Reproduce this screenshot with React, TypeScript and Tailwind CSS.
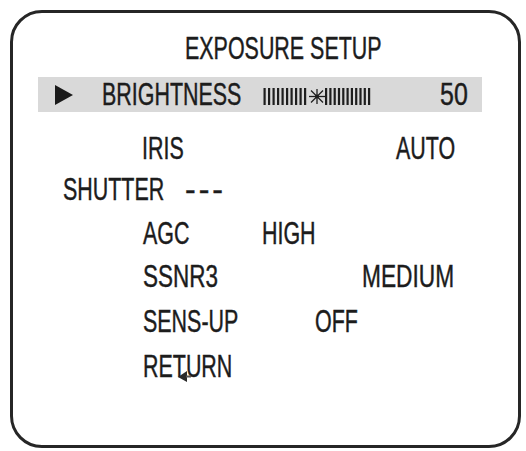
import React from "react";

const T = ({ children, s = "n" }: { children: React.ReactNode; s?: "n" | "d" }) => (
  <span
    className={
      "inline-block whitespace-nowrap origin-left [-webkit-text-stroke:0.45px_#1c1c1c] " +
      (s === "d" ? "scale-x-[0.78]" : "scale-x-[0.67]")
    }
  >
    {children}
  </span>
);

function Slider() {
  const left = Array.from({ length: 10 }, (_, i) => 0.5 + i * 4.5);
  const right = Array.from({ length: 11 }, (_, i) => 62 + i * 4.3);
  return (
    <svg width="108" height="17" viewBox="0 0 108 17" className="block">
      {left.map((x, i) => (
        <rect key={"l" + i} x={x} y={0} width={2.2} height={17} fill="#1e1e1e" />
      ))}
      {right.map((x, i) => (
        <rect key={"r" + i} x={x} y={0} width={2.2} height={17} fill="#1e1e1e" />
      ))}
      <g stroke="#1e1e1e" strokeWidth="1.3">
        <line x1="46" y1="8.5" x2="62" y2="8.5" />
        <line x1="54" y1="1" x2="54" y2="16" />
        <line x1="48" y1="2.5" x2="60" y2="14.5" />
        <line x1="60" y1="2.5" x2="48" y2="14.5" />
      </g>
      <circle cx="54" cy="8.5" r="2" fill="#1e1e1e" />
    </svg>
  );
}

export default function App() {
  return (
    <div
      className="w-[526px] h-[451px] bg-white text-[#1c1c1c] text-[32px] leading-[31px] overflow-hidden"
      style={{ fontFamily: '"Liberation Sans", Arial, sans-serif' }}
    >
      <div className="ml-[10px] mt-[10px] w-[511px] h-[438px] border-[3px] border-[#262626] rounded-[32px] flex flex-col">
        <div className="mt-[20px] pl-[172px] h-[31px]">
          <T>EXPOSURE SETUP</T>
        </div>

        <div className="mt-[13px] ml-[25px] w-[444px] h-[35px] bg-[#d9d9d9] flex items-start pt-[2px]">
          <svg width="18" height="20" viewBox="0 0 18 20" className="ml-[17px] mt-[6px] shrink-0">
            <polygon points="0,0 18,10 0,20" fill="#1a1a1a" />
          </svg>
          <div className="ml-[29px] w-[161px] h-[31px]">
            <T>BRIGHTNESS</T>
          </div>
          <div className="mt-[9px] w-[177px]">
            <Slider />
          </div>
          <div className="h-[31px]">
            <T s="d">50</T>
          </div>
        </div>

        <div className="mt-[21px] pl-[129px] h-[31px] flex">
          <div className="w-[254px]">
            <T>IRIS</T>
          </div>
          <T>AUTO</T>
        </div>

        <div className="mt-[10px] pl-[50px] h-[31px] flex">
          <div className="w-[122px]">
            <T>SHUTTER</T>
          </div>
          <span className="inline-block tracking-[3px] [-webkit-text-stroke:0.45px_#1c1c1c]">---</span>
        </div>

        <div className="mt-[13px] pl-[130px] h-[31px] flex">
          <div className="w-[119px]">
            <T>AGC</T>
          </div>
          <T>HIGH</T>
        </div>

        <div className="mt-[12px] pl-[130px] h-[31px] flex">
          <div className="w-[219px]">
            <T s="d">
              <span className="inline-block scale-x-[0.9] origin-left">SSNR3</span>
            </T>
          </div>
          <span className="inline-block whitespace-nowrap origin-left scale-x-[0.71] [-webkit-text-stroke:0.45px_#1c1c1c]">
            MEDIUM
          </span>
        </div>

        <div className="mt-[14px] pl-[130px] h-[31px] flex">
          <div className="w-[172px]">
            <T>SENS-UP</T>
          </div>
          <T>OFF</T>
        </div>

        <div className="mt-[14px] pl-[130px] h-[31px] flex">
          <div className="relative">
            <T>RETURN</T>
            <svg
              width="20"
              height="18"
              viewBox="0 0 20 18"
              className="absolute left-[34px] top-[14px]"
            >
              <polygon points="1,12 10,6 10,17" fill="#2a2a2a" />
              <line x1="9" y1="11.5" x2="14" y2="11.5" stroke="#555" strokeWidth="2" />
            </svg>
          </div>
        </div>
      </div>
    </div>
  );
}
